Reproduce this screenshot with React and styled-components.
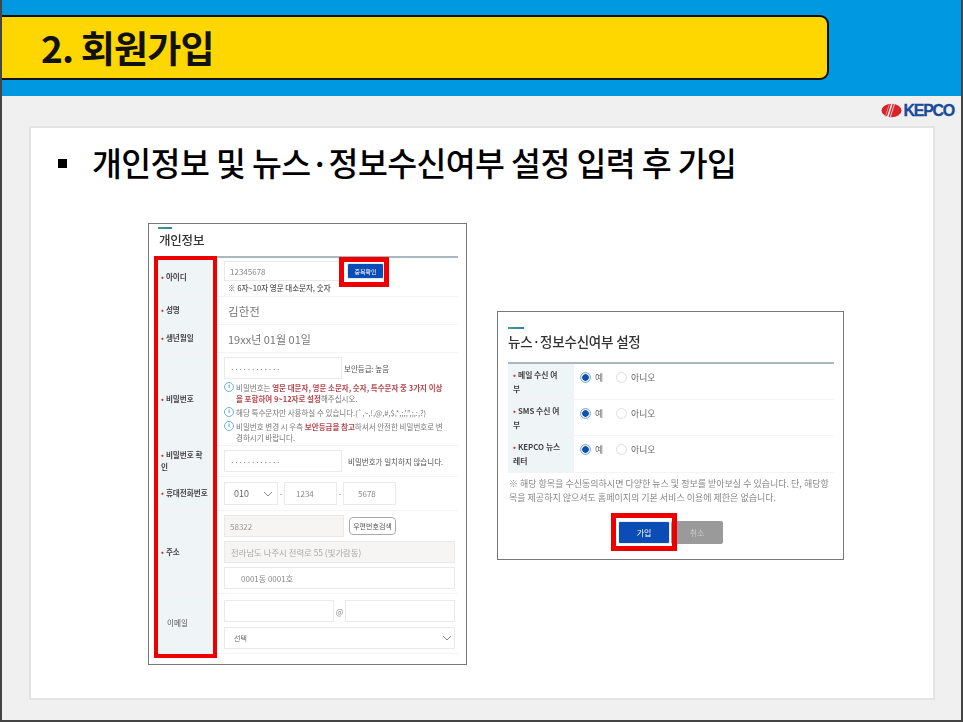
import React from "react";
import styled, { createGlobalStyle } from "styled-components";

const Global = createGlobalStyle`
  * { box-sizing: border-box; }
  html, body { margin: 0; padding: 0; background: #fff; }
  body { font-family: "Noto Sans CJK KR", "Noto Sans", sans-serif; }
`;

const Slide = styled.div`
  width: 963px; height: 722px; display: flex; flex-direction: column;
  background: #f0f0f0; border-left: 2px solid #444; border-right: 2px solid #444; border-bottom: 2px solid #444;
  overflow: hidden;
`;
const Header = styled.header`
  height: 96px; flex: none; background: #0098e0; padding-top: 15px; margin: 0 -2px;
`;
const TitleBar = styled.div`
  width: 829px; height: 65px; background: #ffd700; border: 2px solid #111; border-left: 0;
  border-radius: 0 9px 9px 0; display: flex; align-items: center; padding: 0 0 0 41px;
`;
const Title = styled.h1`
  margin: 0; font-size: 37px; font-weight: 700; color: #111; letter-spacing: -0.8px; line-height: 1;
`;
const LogoRow = styled.div`
  height: 30px; flex: none; display: flex; justify-content: flex-end; align-items: center; padding: 0 7px 1px 0; gap: 2px;
`;
const LogoText = styled.span`
  font-family: "Liberation Sans", sans-serif; font-weight: 700; font-size: 16px; letter-spacing: -1.3px;
  color: #1a4a9c; line-height: 1; -webkit-text-stroke: 0.3px #1a4a9c;
`;
const Card = styled.main`
  width: 906px; height: 574px; margin-left: 27px; background: #fff; border: 2px solid #e3e3e3; padding: 0;
`;
const Heading = styled.div`
  display: flex; align-items: center; gap: 25px; height: 44px; margin: 12px 0 0 27px;
`;
const Square = styled.i`
  width: 9px; height: 9px; background: #000; flex: none; margin-top: 2px;
`;
const HeadingText = styled.h2`
  margin: 0; font-size: 32.5px; font-weight: 500; color: #000; letter-spacing: -0.6px; line-height: 1; white-space: nowrap;
`;
const Shots = styled.div`
  display: flex; align-items: flex-start; gap: 30px; margin: 39px 0 0 117px;
`;
const Shot = styled.section`
  position: relative; flex: none; width: ${p => p.$w}px; height: ${p => p.$h}px; margin-top: ${p => p.$top || 0}px;
  background: #fff; border: 1px solid #777;
`;
const Soft = styled.div`
  width: 100%; height: 100%; filter: blur(0.5px); padding: ${p => p.$pad};
`;
const Dash = styled.div`
  width: ${p => p.$w}px; height: 2px; margin-left: ${p => p.$ml || 0}px; background: linear-gradient(90deg, #46a36c, #2f7fc0);
`;
const ShotTitle = styled.h3`
  margin: ${p => p.$m}; font-size: ${p => p.$s}px; font-weight: 500; color: #333; line-height: 1.2; letter-spacing: -0.2px; white-space: nowrap;
`;
const Table = styled.div`
  border-top: 2px solid #a9b8c0; width: ${p => p.$w}px;
`;
const Row = styled.div`
  display: flex; height: ${p => p.$h}px; border-bottom: 1px solid #f4f4f4;
`;
const Label = styled.div`
  width: ${p => p.$w}px; flex: none; background: #eff4f7; padding: ${p => p.$pad || "0 2px 0 7px"};
  display: flex; align-items: ${p => p.$top ? "flex-start" : "center"};
  font-size: ${p => p.$s || 7.6}px; font-weight: ${p => p.$plain ? 400 : 700}; color: ${p => p.$plain ? "#555" : "#444"}; line-height: ${p => p.$lh || 1.6};
  white-space: nowrap;
`;
const Dot = styled.span`
  color: #c33; margin-right: 2px;
`;
const Cell = styled.div`
  flex: 1; min-width: 0; padding: ${p => p.$pad || "0 0 0 10px"}; display: flex; flex-direction: ${p => p.$col ? "column" : "row"};
  align-items: ${p => p.$col ? "flex-start" : p.$start ? "flex-start" : "center"}; gap: ${p => p.$gap || 0}px;
`;
const Field = styled.div`
  width: ${p => p.$w}px; height: ${p => p.$h || 22}px; flex: none; border: 1px solid #eaeaea; background: ${p => p.$fill ? "#f6f5f4" : "#fff"};
  display: flex; align-items: center; justify-content: space-between; padding: 0 ${p => p.$r || 5}px 0 ${p => p.$l || 5}px;
  font-size: ${p => p.$s || 8}px; color: ${p => p.$c || "#999"}; white-space: nowrap; letter-spacing: ${p => p.$ls || 0}px;
`;
const Static = styled.span`
  font-size: ${p => p.$s}px; color: #777; letter-spacing: ${p => p.$ls}px; padding-left: 4px;
`;
const Small = styled.span`
  font-size: 7.5px; color: ${p => p.$c || "#555"}; white-space: nowrap; margin-left: ${p => p.$ml || 0}px; font-weight: ${p => p.$b || 400};
`;
const Dash2 = styled.span`
  width: 6px; text-align: center; font-size: 7.5px; color: #777;
`;
const At = styled.span`
  width: 11px; text-align: center; font-size: 8px; color: #888;
`;
const Check = styled.button`
  width: 37px; height: 16px; border: 1px solid #dfe8f5; border-radius: 2px; background: #0b4db5; color: #fff; font: inherit; font-size: 6px; padding: 0; margin-left: 7px;
`;
const Pale = styled.button`
  width: 47px; height: 18px; border: 1.5px solid #aaa; border-radius: 4px; background: #fff; color: #555; font: inherit; font-size: 7px; padding: 0; margin-left: 5px; white-space: nowrap;
`;
const Line = styled.div`
  display: flex; gap: ${p => p.$gap || 0}px; align-items: center;
`;
const Note = styled.div`
  font-size: 7.5px; color: #777; line-height: 11px; white-space: nowrap; position: relative; padding-left: 12px; margin-top: ${p => p.$mt || 0}px;
  b { color: #b5474f; font-weight: 700; }
`;
const InfoIcon = styled.span`
  position: absolute; left: 0; top: 0; width: 10px; height: 10px; border: 1.5px solid #6fb0dc; border-radius: 50%;
  font-size: 6px; line-height: 7px; text-align: center; color: #4a90c8; font-family: "Liberation Sans", sans-serif; font-weight: 700;
`;
const Red = styled.div`
  position: absolute; left: ${p => p.$x}px; top: ${p => p.$y}px; width: ${p => p.$w}px; height: ${p => p.$h}px; border: ${p => p.$b}px solid #ee0000; pointer-events: none;
`;
const RadioWrap = styled.span`
  display: inline-flex; align-items: center; gap: 4px; font-size: 8.8px; color: #666; margin-right: ${p => p.$mr}px;
`;
const Radio = styled.i`
  width: 11px; height: 11px; border-radius: 50%; flex: none; border: 1px solid ${p => p.$on ? "#7ea6de" : "#ddd"};
  background: ${p => p.$on ? "radial-gradient(circle, #0f4fae 0 3px, #e6eefa 3.5px)" : "#fff"};
`;
const Notice = styled.p`
  margin: 4px 0 0 1px; font-size: 9px; line-height: 14px; color: #888; white-space: nowrap;
`;
const Buttons = styled.div`
  display: flex; justify-content: center; margin: 16px 0 0 0; padding-right: 10px; gap: 1px;
`;
const Btn = styled.button`
  width: 52px; height: 23px; border: ${p => p.$primary ? "1px solid #e8eef8" : 0}; border-radius: 2px;
  background: ${p => p.$primary ? "#0b4db5" : "#9a9a9a"}; color: ${p => p.$primary ? "#fff" : "#ccc"}; font: inherit; font-size: 8px; padding: 0;
`;

const Chevron = ({ size = 10 }) => (
  <svg width={size} height={size * 0.6} viewBox="0 0 10 6" fill="none" stroke="#888" strokeWidth="1"><path d="M1 1l4 4 4-4" /></svg>
);
const Logo = () => (
  <svg width="21" height="15" viewBox="0 0 21 15">
    <ellipse cx="10.5" cy="7.5" rx="10" ry="6.8" fill="#d8232a" />
    <path d="M11 0.5 L6.5 14.5" stroke="#fff" strokeWidth="1.4" />
    <path d="M13.6 0.6 L9.2 14.4" stroke="#f4b0b0" strokeWidth="1.2" />
    <path d="M8.4 1 L4.4 13.6" stroke="#ee8a8a" strokeWidth="1" />
  </svg>
);
const Info = ({ mt, children }) => <Note $mt={mt}><InfoIcon>i</InfoIcon>{children}</Note>;

const ConsentRow = ({ h, label }) => (
  <Row $h={h}>
    <Label $w={66} $top $s={7.8} $lh={1.75} $pad="4px 2px 0 5px"><span><Dot>•</Dot>{label}</span></Label>
    <Cell $start $pad="7px 0 0 6px">
      <RadioWrap $mr={13}><Radio $on />예</RadioWrap>
      <RadioWrap $mr={0}><Radio />아니오</RadioWrap>
    </Cell>
  </Row>
);

export default function App() {
  return (
    <Slide>
      <Global />
      <Header>
        <TitleBar><Title>2. 회원가입</Title></TitleBar>
      </Header>
      <LogoRow><Logo /><LogoText>KEPCO</LogoText></LogoRow>
      <Card>
        <Heading>
          <Square />
          <HeadingText>개인정보 및 뉴스·정보수신여부 설정 입력 후 가입</HeadingText>
        </Heading>
        <Shots>
          <Shot $w={319} $h={442}>
            <Soft $pad="3px 0 0 5px">
              <Dash $w={14} $ml={4} />
              <ShotTitle $s={12.5} $m="3px 0 9px 5px">개인정보</ShotTitle>
              <Table $w={304}>
                <Row $h={39}>
                  <Label $w={60}><span><Dot>•</Dot>아이디</span></Label>
                  <Cell $col $pad="3px 0 0 10px" $gap={1}>
                    <Line>
                      <Field $w={116} $h={20} $c="#888">12345678</Field>
                      <Check>중복확인</Check>
                    </Line>
                    <Small $ml={4} $b={500}>※ 6자~10자 영문 대소문자, 숫자</Small>
                  </Cell>
                </Row>
                <Row $h={28}>
                  <Label $w={60}><span><Dot>•</Dot>성명</span></Label>
                  <Cell><Static $s={11.5} $ls={0.1}>김한전</Static></Cell>
                </Row>
                <Row $h={28}>
                  <Label $w={60}><span><Dot>•</Dot>생년월일</span></Label>
                  <Cell><Static $s={11} $ls={0}>19xx년 01월 01일</Static></Cell>
                </Row>
                <Row $h={93}>
                  <Label $w={60}><span><Dot>•</Dot>비밀번호</span></Label>
                  <Cell $col $pad="4px 0 0 10px">
                    <Line $gap={2}>
                      <Field $w={118} $c="#666" $ls={-0.3}>············</Field>
                      <Small>보안등급: 높음</Small>
                    </Line>
                    <Info mt={3}>비밀번호는 <b>영문 대문자, 영문 소문자, 숫자, 특수문자 중 3가지 이상</b><br /><b>을 포함하여 9~12자로 설정</b>해주십시오.</Info>
                    <Info mt={3}>해당 특수문자만 사용하실 수 있습니다.(`,~,!,@,#,$,*,;,',",;,:,?)</Info>
                    <Info mt={3}>비밀번호 변경 시 우측 <b>보안등급을 참고</b>하셔서 안전한 비밀번호로 변<br />경하시기 바랍니다.</Info>
                  </Cell>
                </Row>
                <Row $h={31}>
                  <Label $w={60} $pad="0 0 0 7px"><span><Dot>•</Dot>비밀번호 확<br />인</span></Label>
                  <Cell>
                    <Field $w={118} $c="#666" $ls={-0.3}>············</Field>
                    <Small $ml={6}>비밀번호가 일치하지 않습니다.</Small>
                  </Cell>
                </Row>
                <Row $h={34}>
                  <Label $w={60} $pad="0 0 0 7px"><span><Dot>•</Dot>휴대전화번호</span></Label>
                  <Cell>
                    <Field $w={54} $h={23} $l={9} $r={4} $s={9} $c="#666">010<Chevron /></Field>
                    <Dash2>-</Dash2>
                    <Field $w={53} $h={23} $l={11} $c="#888">1234</Field>
                    <Dash2>-</Dash2>
                    <Field $w={53} $h={23} $l={14} $c="#888">5678</Field>
                  </Cell>
                </Row>
                <Row $h={83}>
                  <Label $w={60}><span><Dot>•</Dot>주소</span></Label>
                  <Cell $col $gap={4} $pad="4px 0 0 10px">
                    <Line>
                      <Field $w={120} $h={22} $fill $c="#999">58322</Field>
                      <Pale>우편번호검색</Pale>
                    </Line>
                    <Field $w={231} $h={22} $fill $l={6} $s={8.4} $c="#aaa">전라남도 나주시 전력로 55 (빛가람동)</Field>
                    <Field $w={231} $h={22} $l={16} $c="#888">0001동 0001호</Field>
                  </Cell>
                </Row>
                <Row $h={60}>
                  <Label $w={60} $plain $pad="0 0 0 13px">이메일</Label>
                  <Cell $col $gap={5} $pad="6px 0 0 10px">
                    <Line>
                      <Field $w={110} />
                      <At>@</At>
                      <Field $w={110} />
                    </Line>
                    <Field $w={231} $l={9} $r={2} $s={7} $c="#666">선택<Chevron /></Field>
                  </Cell>
                </Row>
              </Table>
            </Soft>
            <Red $x={5} $y={32} $w={63} $h={402} $b={4} />
            <Red $x={190} $y={33} $w={50} $h={30} $b={5} />
          </Shot>
          <Shot $w={347} $h={249} $top={88}>
            <Soft $pad="15px 0 0 10px">
              <Dash $w={16} />
              <ShotTitle $s={13.5} $m="4px 0 13px 0">뉴스·정보수신여부 설정</ShotTitle>
              <Table $w={326}>
                <ConsentRow h={36} label={<>메일 수신 여<br />부</>} />
                <ConsentRow h={36} label={<>SMS 수신 여<br />부</>} />
                <ConsentRow h={37} label={<>KEPCO 뉴스<br />레터</>} />
              </Table>
              <Notice>※ 해당 항목을 수신동의하시면 다양한 뉴스 및 정보를 받아보실 수 있습니다. 단, 해당항<br />목을 제공하지 않으셔도 홈페이지의 기본 서비스 이용에 제한은 없습니다.</Notice>
              <Buttons>
                <Btn $primary>가입</Btn>
                <Btn>취소</Btn>
              </Buttons>
            </Soft>
            <Red $x={113} $y={201} $w={66} $h={38} $b={5} />
          </Shot>
        </Shots>
      </Card>
    </Slide>
  );
}
